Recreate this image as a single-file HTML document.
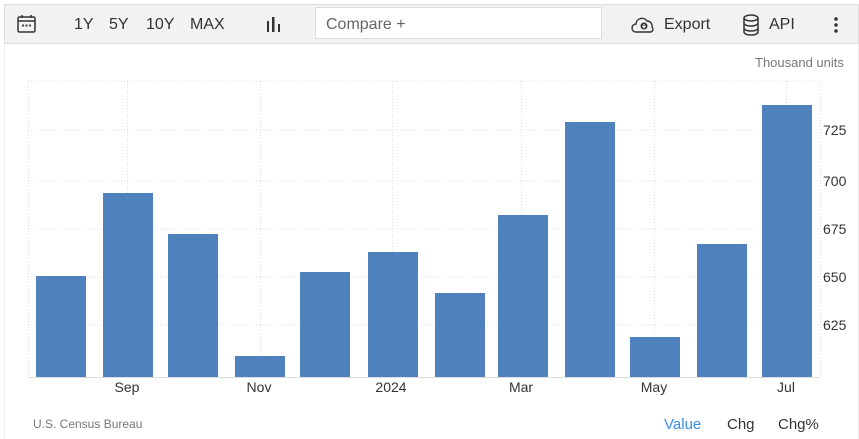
<!DOCTYPE html>
<html><head><meta charset="utf-8"><style>
body{margin:0;width:859px;height:439px;background:#fff;font-family:"Liberation Sans",Arial,sans-serif;position:relative;overflow:hidden}
.tb{position:absolute;left:4px;top:4px;width:853px;height:38px;background:#f2f2f2;border:1px solid #ddd}
.t{position:absolute;top:16px;font-size:16px;color:#333}
.cmp{position:absolute;left:315px;top:7px;width:287px;height:32px;background:#fff;border:1px solid #ddd;box-sizing:border-box}
.cmp span{position:absolute;left:10px;top:8px;font-size:16px;color:#666}
.border{position:absolute;left:4px;top:43px;width:853px;height:396px;border-left:1px solid #eee;border-right:1px solid #eee}
</style></head><body>
<div class="tb"></div>
<div class="border"></div>
<svg style="position:absolute;left:17px;top:14px" width="20" height="20" viewBox="0 0 20 20" fill="none" stroke="#333" stroke-width="1.5"><rect x="1" y="3" width="17" height="15" rx="1.5"/><line x1="1" y1="7" x2="18" y2="7"/><line x1="5" y1="1" x2="5" y2="4"/><line x1="14" y1="1" x2="14" y2="4"/><circle cx="6" cy="11.5" r=".4" fill="#333"/><circle cx="9.5" cy="11.5" r=".4" fill="#333"/><circle cx="13" cy="11.5" r=".4" fill="#333"/></svg>
<div class="t" style="left:74px">1Y</div>
<div class="t" style="left:109px">5Y</div>
<div class="t" style="left:146px">10Y</div>
<div class="t" style="left:190px">MAX</div>
<svg style="position:absolute;left:266px;top:16px" width="16" height="16"><rect x="1" y="5" width="2" height="11" fill="#333"/><rect x="6" y="1" width="2.5" height="15" fill="#333"/><rect x="12" y="8" width="2" height="8" fill="#333"/></svg>
<div class="cmp"><span>Compare +</span></div>
<svg style="position:absolute;left:631px;top:16px" width="26" height="18" viewBox="0 0 26 18" fill="none" stroke="#333" stroke-width="1.4"><path d="M6 16H5a4 4 0 0 1 0-8 6 6 0 0 1 11-3 5 5 0 0 1 5 6 3 3 0 0 1-1 5H6z"/><circle cx="13" cy="10" r="3.5" fill="#333" stroke="none"/><path d="M13 8v3.5M11.3 10l1.7 1.7 1.7-1.7" stroke="#fff" stroke-width="1.1"/></svg>
<div class="t" style="left:664px">Export</div>
<svg style="position:absolute;left:742px;top:14px" width="18" height="22" viewBox="0 0 18 22" fill="none" stroke="#333" stroke-width="1.5"><ellipse cx="9" cy="4" rx="7" ry="3"/><path d="M2 4v14c0 1.7 3 3 7 3s7-1.3 7-3V4M2 9c0 1.7 3 3 7 3s7-1.3 7-3M2 14c0 1.7 3 3 7 3s7-1.3 7-3"/></svg>
<div class="t" style="left:769px">API</div>
<svg style="position:absolute;left:833px;top:17px" width="6" height="16"><circle cx="3" cy="2" r="1.8" fill="#333"/><circle cx="3" cy="8" r="1.8" fill="#333"/><circle cx="3" cy="14" r="1.8" fill="#333"/></svg>
<div style="position:absolute;left:755px;top:55px;font-size:13px;color:#777">Thousand units</div>
<svg style="position:absolute;left:0;top:0" width="859" height="439" font-family="Liberation Sans,Arial,sans-serif">
<g stroke="#ddd" stroke-dasharray="1,2" stroke-width="1">
<line x1="28" y1="81" x2="820" y2="81"/>
<line x1="28" y1="130" x2="820" y2="130"/><line x1="28" y1="181" x2="820" y2="181"/><line x1="28" y1="229" x2="820" y2="229"/><line x1="28" y1="277" x2="820" y2="277"/><line x1="28" y1="325" x2="820" y2="325"/>
<line x1="28.5" y1="81" x2="28.5" y2="377"/><line x1="127.5" y1="81" x2="127.5" y2="377"/><line x1="260.5" y1="81" x2="260.5" y2="377"/><line x1="392.5" y1="81" x2="392.5" y2="377"/><line x1="521.5" y1="81" x2="521.5" y2="377"/><line x1="654.5" y1="81" x2="654.5" y2="377"/><line x1="786.5" y1="81" x2="786.5" y2="377"/><line x1="820.5" y1="81" x2="820.5" y2="377"/>
</g>
<line x1="28" y1="377.5" x2="820" y2="377.5" stroke="#ddd"/>
<g fill="#4f81bd">
<rect x="36" y="276" width="50" height="101"/><rect x="103" y="193" width="50" height="184"/><rect x="168" y="234" width="50" height="143"/><rect x="235" y="356" width="50" height="21"/><rect x="300" y="272" width="50" height="105"/><rect x="368" y="252" width="50" height="125"/><rect x="435" y="293" width="50" height="84"/><rect x="498" y="215" width="50" height="162"/><rect x="565" y="122" width="50" height="255"/><rect x="630" y="337" width="50" height="40"/><rect x="697" y="244" width="50" height="133"/><rect x="762" y="105" width="50" height="272"/>
</g>
<g font-size="14" fill="#333">
<text x="823" y="135">725</text><text x="823" y="186">700</text><text x="823" y="234">675</text><text x="823" y="282">650</text><text x="823" y="330">625</text>
</g>
<g font-size="14" fill="#333" text-anchor="middle">
<text x="127" y="392">Sep</text><text x="259" y="392">Nov</text><text x="391" y="392">2024</text><text x="521" y="392">Mar</text><text x="654" y="392">May</text><text x="786" y="392">Jul</text>
</g>
<text x="33" y="428" font-size="12" fill="#777">U.S. Census Bureau</text>
<text x="664" y="429" font-size="15" fill="#3a8ee6">Value</text>
<text x="727" y="429" font-size="15" fill="#333">Chg</text>
<text x="778" y="429" font-size="15" fill="#333">Chg%</text>
</svg>
</body></html>
